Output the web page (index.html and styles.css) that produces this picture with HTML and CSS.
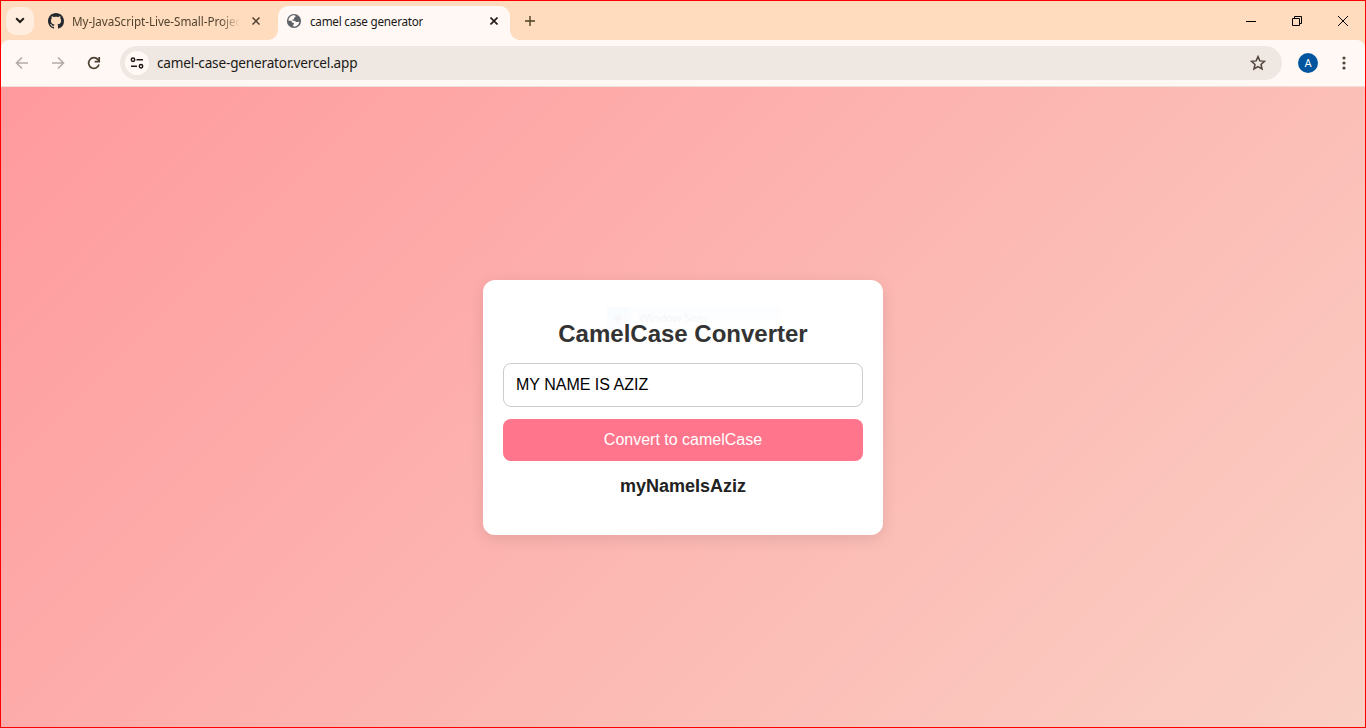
FILE: index.html
```html
<!DOCTYPE html>
<html lang="en">
<head>
<meta charset="utf-8">
<title>camel case generator</title>
<link rel="stylesheet" href="styles.css">
</head>
<body>
<div class="window">
  <header class="tabstrip">
    <div class="tab-search"><svg width="10" height="7" viewBox="0 0 10 7"><path d="M1.2 1.2 5 5l3.800-3.800" fill="none" stroke="#1f1b16" stroke-width="2"/></svg></div>
    <div class="tab tab-idle">
      <svg class="favicon" viewBox="0 0 16 16"><path fill="#24292f" d="M8 0C3.58 0 0 3.58 0 8c0 3.54 2.29 6.53 5.47 7.59.4.07.55-.17.55-.38 0-.19-.01-.82-.01-1.49-2.01.37-2.53-.49-2.69-.94-.09-.23-.48-.94-.82-1.13-.28-.15-.68-.52-.01-.53.63-.01 1.08.58 1.23.82.72 1.21 1.87.87 2.33.66.07-.52.28-.87.51-1.07-1.78-.2-3.64-.89-3.64-3.95 0-.87.31-1.59.82-2.15-.08-.2-.36-1.02.08-2.12 0 0 .67-.21 2.2.82.64-.18 1.32-.27 2-.27s1.36.09 2 .27c1.53-1.04 2.2-.82 2.2-.82.44 1.1.16 1.92.08 2.12.51.56.82 1.27.82 2.15 0 3.07-1.87 3.75-3.65 3.95.29.25.54.73.54 1.48 0 1.07-.01 1.93-.01 2.2 0 .21.15.46.55.38A8.01 8.01 0 0 0 16 8c0-4.42-3.58-8-8-8Z"/></svg>
      <span class="tab-title faded">My-JavaScript-Live-Small-Projects</span>
      <svg class="close" viewBox="0 0 8 8"><path d="M.5.5l7 7M7.5.5l-7 7" stroke="#4c3f30" stroke-width="1.5"/></svg>
    </div>
    <div class="tab tab-active">
      <svg class="favicon globe" viewBox="0 0 16 16"><circle cx="8" cy="8" r="7.1" fill="#5f6368"/><path d="M8.2 2.3c1 .2 1.7.7 1.3 1.4-.3.6-1.1.4-1.4 1-.3.7.4 1.1-.3 1.6-.6.4-1.4 0-1.6.7-.1.7 1 .7 2 .7 1.2 0 1.3.9 2.1 1.2.9.3 1.7-.4 3-.2-.2 2.6-2.4 4.8-5.3 4.8-.6 0-1-.3-1-.8 0-1.2 1-1 1.1-1.9 0-1-1.4-.8-2-1.6-.5-.7-.4-1.2-1.3-1.4-.9-.2-1.8.1-2.3-.4.1-2.8 2.6-5.3 5.7-5.1Z" fill="#fff8f5"/></svg>
      <span class="tab-title">camel case generator</span>
      <svg class="close" viewBox="0 0 8 8"><path d="M.5.5l7 7M7.5.5l-7 7" stroke="#201a17" stroke-width="1.6"/></svg>
    </div>
    <svg class="new-tab" viewBox="0 0 10 10"><path d="M5 0v10M0 5h10" stroke="#4c3f20" stroke-width="1.4"/></svg>
    <div class="window-controls">
      <svg viewBox="0 0 12 12"><path d="M1 6.5h10" stroke="#000"/></svg>
      <svg viewBox="0 0 12 12"><path d="M1.5 3.5h7v7h-7zM3.5 3.500v-2h7v7h-2" fill="none" stroke="#000"/></svg>
      <svg viewBox="0 0 12 12"><path d="M1 1l10 10M11 1 1 11" stroke="#000"/></svg>
    </div>
  </header>
  <nav class="toolbar">
    <svg class="nav-icon" viewBox="0 0 16 16"><path d="M14 8H3M8 2.5 2.5 8 8 13.5" fill="none" stroke="#b5aaa6" stroke-width="1.6"/></svg>
    <svg class="nav-icon" viewBox="0 0 16 16"><path d="M2 8h11M8 2.5 13.5 8 8 13.5" fill="none" stroke="#b5aaa6" stroke-width="1.6"/></svg>
    <svg class="nav-icon" viewBox="0 0 16 16"><path d="M13 9.6A5.3 5.3 0 1 1 12 4.600L13.200 6" fill="none" stroke="#4c3f30" stroke-width="1.7"/><path d="M13.200 2v4.700H8.600" fill="none" stroke="#4c3f30" stroke-width="1.7"/></svg>
    <div class="omnibox">
      <div class="site-info"><svg width="14" height="14" viewBox="0 0 14 14"><g fill="none" stroke="#201a17" stroke-width="1.5"><circle cx="3" cy="3.7" r="1.7"/><path d="M6.5 3.7H13M1 10.3h6"/><circle cx="11" cy="10.3" r="1.7"/></g></svg></div>
      <span class="url">camel-case-generator.vercel.app</span>
      <svg class="star" viewBox="0 0 16 16"><path d="m8 1.600 1.850 4.300 4.650.4-3.500 3.100 1.050 4.600L8 11.550 3.950 14 5 9.400 1.500 6.300l4.650-.4Z" fill="none" stroke="#51443d" stroke-width="1.5"/></svg>
    </div>
    <div class="avatar">A</div>
    <svg class="menu" viewBox="0 0 4 14"><g fill="#51443a"><circle cx="2" cy="2" r="1.6"/><circle cx="2" cy="7" r="1.6"/><circle cx="2" cy="12" r="1.6"/></g></svg>
  </nav>
  <main class="page">
    <section class="card">
      <div class="snip"><span class="snip-icon"></span><span class="snip-label">Window Snip</span></div>
      <h2 class="title">CamelCase Converter</h2>
      <input class="field" type="text" value="MY NAME IS AZIZ">
      <button class="convert">Convert to camelCase</button>
      <p class="result">myNameIsAziz</p>
    </section>
  </main>
</div>
</body>
</html>
```
FILE: styles.css
```css
* { box-sizing: border-box; }
body { margin: 0; font-family: "Liberation Sans", Arial, sans-serif; }
svg { display: block; flex: none; }
.window { width: 1366px; height: 728px; border: 1px solid #f00; display: flex; flex-direction: column; overflow: hidden; background: #ffdcbd; }
.tabstrip { height: 39px; flex: none; display: flex; align-items: center; padding-left: 5px; font-family: "Noto Sans", sans-serif; }
.tab-search { width: 28px; height: 28px; border-radius: 10px; background: #ffeee0; display: flex; align-items: center; justify-content: center; }
.tab { display: flex; align-items: center; }
.favicon { width: 16px; height: 16px; }
.close { width: 8px; height: 8px; }
.tab-title { font-size: 11.7px; line-height: 16px; white-space: nowrap; overflow: hidden; margin-left: 8px; color: #201a17; letter-spacing: -0.24px; }
.tab-idle { width: 244px; padding: 0 18px 0 14px; }
.tab-idle .tab-title { width: 168px; margin-right: auto; color: #51432f; letter-spacing: -0.05px; }
.faded { -webkit-mask-image: linear-gradient(90deg, #000 88%, transparent); mask-image: linear-gradient(90deg, #000 88%, transparent); }
.tab-active { position: relative; align-self: flex-end; height: 34px; width: 232px; padding: 0 12px 4px 8px; background: #fff8f5; border-radius: 10px 10px 0 0; }
.tab-active::before, .tab-active::after { content: ""; position: absolute; bottom: 0; width: 10px; height: 10px; }
.tab-active::before { left: -10px; background: radial-gradient(circle at 0 0, transparent 9.5px, #fff8f5 10.2px); }
.tab-active::after { right: -10px; background: radial-gradient(circle at 100% 0, transparent 9.5px, #fff8f5 10.2px); }
.tab-active .close { margin-left: auto; }
.new-tab { width: 10px; height: 10px; margin-left: 15px; }
.window-controls { margin-left: auto; display: flex; gap: 34px; padding-right: 16px; }
.window-controls svg { width: 12px; height: 12px; }
.toolbar { height: 47px; flex: none; display: flex; align-items: center; padding: 0 19px 1px 13px; background: #fff8f5; border-bottom: 1px solid #eee0d9; border-radius: 8px 8px 0 0; }
.nav-icon { width: 16px; height: 16px; margin-right: 20px; }
.omnibox { width: 1162px; height: 34px; margin-left: -2px; border-radius: 17px; background: #efe7e2; display: flex; align-items: center; padding: 0 16px 0 5px; }
.site-info { width: 24px; height: 24px; border-radius: 50%; background: #fff8f5; display: flex; align-items: center; justify-content: center; }
.url { font: 13.6px/20px "Noto Sans", sans-serif; color: #201a17; margin-left: 8px; letter-spacing: -0.18px; }
.star { width: 16px; height: 16px; margin-left: auto; }
.avatar { width: 20px; height: 20px; margin-left: 16px; border-radius: 50%; background: #00569e; color: #fff; font: 11px/21px Roboto, sans-serif; text-align: center; }
.menu { width: 4px; height: 14px; margin-left: auto; }
.page { flex: 1; background: linear-gradient(135deg, #ff9a9e, #fad0c4); display: flex; align-items: center; justify-content: center; }
.card { position: relative; width: 400px; height: 255px; padding: 40px 20px; border-radius: 12px; background: #fff; box-shadow: 0 4px 15px rgba(0,0,0,.1); text-align: center; }
.title { position: relative; margin: 0 0 16px; font-size: 24px; line-height: 27px; color: #333; }
.field { display: block; width: 100%; height: 44px; padding: 12px; border: 1px solid #ccc; border-radius: 8px; font: 16px "Liberation Sans", Arial, sans-serif; color: #000; background: #fff; outline: 0; }
.convert { display: block; width: 100%; height: 42px; margin-top: 12px; padding: 0; border: 0; border-radius: 8px; background: #ff758c; color: #fff; font: 16px "Liberation Sans", Arial, sans-serif; }
.result { margin: 15px 0 0; font-size: 18px; line-height: 20px; font-weight: bold; color: #222; }
.snip { position: absolute; left: 124px; top: 27px; width: 174px; height: 22px; display: flex; align-items: center; background: linear-gradient(#fcfdff, #fff); }
.snip-icon { width: 22px; height: 22px; background: radial-gradient(circle at 11px 11px, #f6f6f7 2.5px, transparent 3.5px), linear-gradient(#f8fcff, #fcfdff); }
.snip-label { margin-left: 10px; font: 11.5px/16px "Noto Sans", sans-serif; letter-spacing: -0.2px; color: #f5f6f7; }
```
